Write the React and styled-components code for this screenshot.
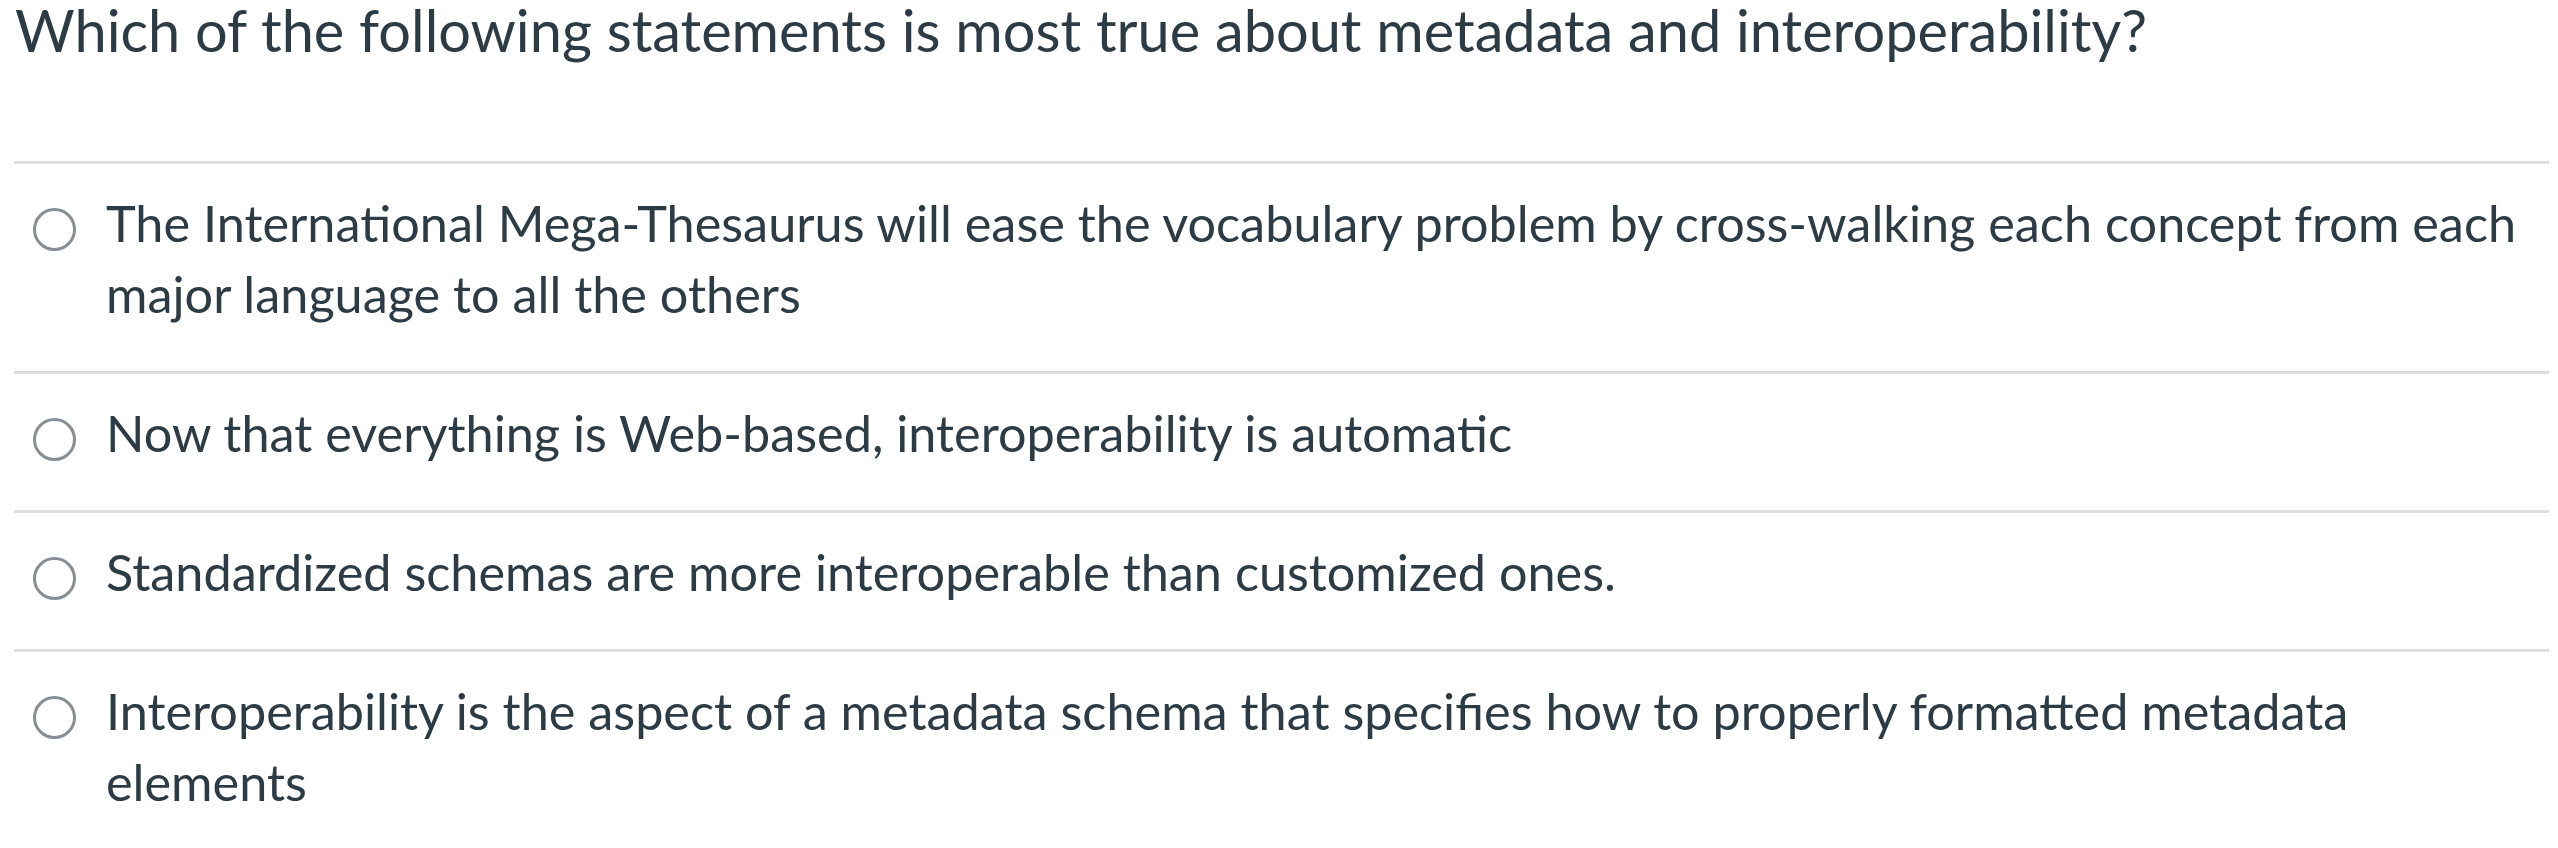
import React from 'react'
import styled, { createGlobalStyle } from 'styled-components'

const GlobalStyle = createGlobalStyle`
  html, body {
    margin: 0;
    padding: 0;
    background: #ffffff;
  }
  body {
    font-family: Lato, "Open Sans", sans-serif;
    color: #2d3b45;
  }
`

const Question = styled.div`
  padding: 0 9px 0 14px;
`

const Prompt = styled.div`
  font-size: 57.7px;
  line-height: 60px;
  padding: 0 0 101px 1px;
`

const Answers = styled.div`
  display: flex;
  flex-direction: column;
`

const Answer = styled.label`
  display: flex;
  align-items: flex-start;
  gap: 30px;
  padding: 23px 0 42px 19px;
  border-top: 3px solid #dcdfe1;
  font-size: 50.4px;
  line-height: 71px;
`

const Radio = styled.span`
  flex: none;
  width: 43px;
  height: 43px;
  margin-top: 21px;
  border: 3px solid #878f95;
  border-radius: 50%;
  box-sizing: border-box;
  background: #fff;
`

const AnswerText = styled.span`
  flex: 1;
`

const answers = [
  'The International Mega-Thesaurus will ease the vocabulary problem by cross-walking each concept from each major language to all the others',
  'Now that everything is Web-based, interoperability is automatic',
  'Standardized schemas are more interoperable than customized ones.',
  'Interoperability is the aspect of a metadata schema that specifies how to properly formatted metadata elements'
]

const App = () => {
  return (
    <>
      <GlobalStyle />
      <Question>
        <Prompt>Which of the following statements is most true about metadata and interoperability?</Prompt>
        <Answers>
          {answers.map((text) => (
            <Answer key={text}>
              <Radio />
              <AnswerText>{text}</AnswerText>
            </Answer>
          ))}
        </Answers>
      </Question>
    </>
  )
}

export default App
